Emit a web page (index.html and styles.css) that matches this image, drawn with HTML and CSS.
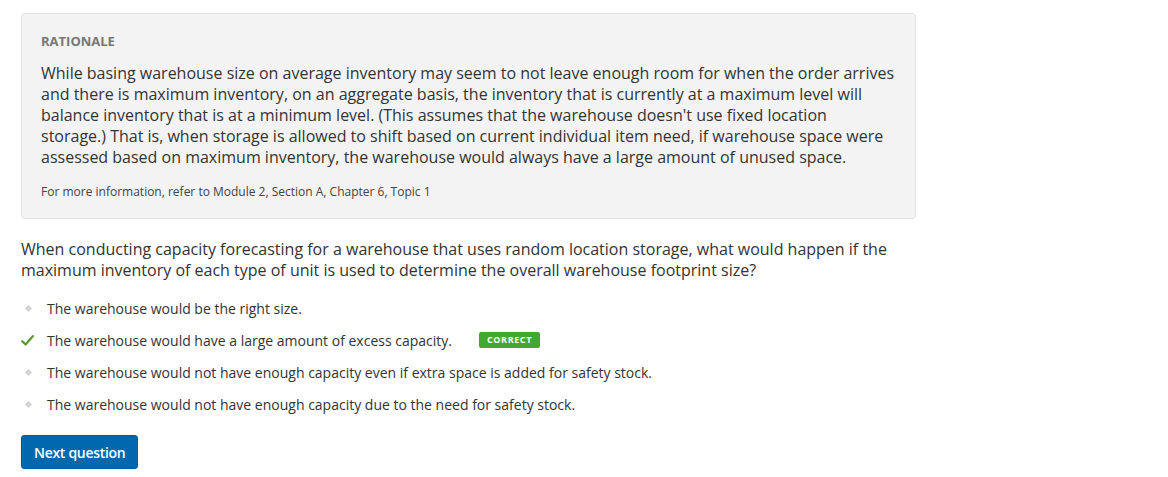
FILE: index.html
```html
<!DOCTYPE html>
<html>
<head>
<meta charset="utf-8">
<link rel="stylesheet" href="styles.css">
</head>
<body>
<div class="page">
  <div class="rationale">
    <div class="rationale-title">RATIONALE</div>
    <p class="rationale-text">While basing warehouse size on average inventory may seem to not leave enough room for when the order arrives and there is maximum inventory, on an aggregate basis, the inventory that is currently at a maximum level will balance inventory that is at a minimum level. (This assumes that the warehouse doesn't use fixed location storage.) That is, when storage is allowed to shift based on current individual item need, if warehouse space were assessed based on maximum inventory, the warehouse would always have a large amount of unused space.</p>
    <p class="rationale-ref">For more information, refer to Module 2, Section A, Chapter 6, Topic 1</p>
  </div>
  <p class="question">When conducting capacity forecasting for a warehouse that uses random location storage, what would happen if the maximum inventory of each type of unit is used to determine the overall warehouse footprint size?</p>
  <ul class="options">
    <li class="option"><span class="marker"><span class="dot"></span></span><span class="option-text">The warehouse would be the right size.</span></li>
    <li class="option"><span class="marker"><svg class="check" width="13" height="11" viewBox="0 0 13 11"><path d="M1.2 6.2 L4.6 9.4 L11.8 1.2" fill="none" stroke="#5a9a2a" stroke-width="2.2" stroke-linecap="round" stroke-linejoin="round"/></svg></span><span class="option-text">The warehouse would have a large amount of excess capacity.</span><span class="badge">CORRECT</span></li>
    <li class="option"><span class="marker"><span class="dot"></span></span><span class="option-text">The warehouse would not have enough capacity even if extra space is added for safety stock.</span></li>
    <li class="option"><span class="marker"><span class="dot"></span></span><span class="option-text">The warehouse would not have enough capacity due to the need for safety stock.</span></li>
  </ul>
  <button class="next-btn">Next question</button>
</div>
</body>
</html>
```
FILE: styles.css
```css
* { box-sizing: border-box; }
body {
  margin: 0;
  font-family: "Open Sans", "Noto Sans", sans-serif;
  color: #333;
  background: #fff;
}
.page {
  padding: 13px 0 0 21px;
  width: 916px;
}
.rationale {
  background: #f3f3f3;
  border: 1px solid #e2e2e2;
  border-radius: 4px;
  padding: 19px 20px 18px 19px;
}
.rationale-title {
  font-size: 13px;
  font-weight: 700;
  color: #777;
  line-height: 16px;
}
.rationale-text {
  margin: 14px 0 0 0;
  font-size: 16px;
  line-height: 21px;
  color: #333;
}
.rationale-ref {
  margin: 16px 0 0 0;
  font-size: 12px;
  line-height: 16px;
  color: #444;
}
.question {
  margin: 20px 0 0 0;
  font-size: 16px;
  line-height: 21px;
  color: #333;
  max-width: 880px;
}
.options {
  list-style: none;
  margin: 11px 0 0 0;
  padding: 0;
}
.option {
  display: flex;
  align-items: center;
  height: 32px;
  font-size: 14px;
  color: #333;
}
.marker {
  width: 26px;
  display: flex;
  align-items: center;
  justify-content: flex-start;
}
.dot {
  display: block;
  width: 5px;
  height: 5px;
  margin-left: 5px;
  background: #d2d2d2;
  transform: rotate(45deg);
}
.check { display: block; margin-left: 0; }
.badge {
  margin-left: 27px;
  background: #43a830;
  color: #fff;
  font-size: 9px;
  font-weight: 700;
  letter-spacing: 0.6px;
  line-height: 14px;
  padding: 1px 8px;
  border-radius: 2px;
}
.next-btn {
  margin-top: 15px;
  font-family: "Open Sans", "Noto Sans", sans-serif;
  font-size: 14px;
  font-weight: 600;
  letter-spacing: -0.3px;
  color: #fff;
  background: #0068ae;
  border: 1px solid #005a99;
  border-radius: 3px;
  height: 34px;
  padding: 0 12px;
  cursor: pointer;
}
```
